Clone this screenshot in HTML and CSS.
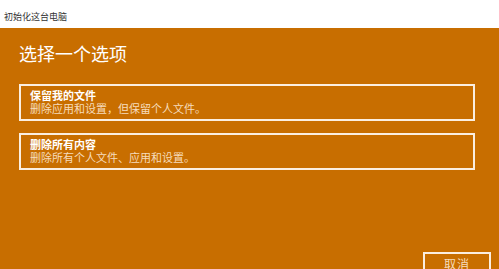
FILE: index.html
```html
<!DOCTYPE html>
<html lang="zh-CN">
<head>
<meta charset="utf-8">
<link rel="stylesheet" href="styles.css">
</head>
<body>
<div class="titlebar">初始化这台电脑</div>
<div class="main">
  <h1 class="heading">选择一个选项</h1>
  <div class="options">
    <div class="option">
      <div class="opt-title">保留我的文件</div>
      <div class="opt-desc">删除应用和设置，但保留个人文件。</div>
    </div>
    <div class="option">
      <div class="opt-title">删除所有内容</div>
      <div class="opt-desc">删除所有个人文件、应用和设置。</div>
    </div>
  </div>
  <div class="footer">
    <div class="btn">取消</div>
  </div>
</div>
</body>
</html>
```
FILE: styles.css
```css
html, body {
  margin: 0;
  padding: 0;
  width: 499px;
  height: 269px;
  overflow: hidden;
  font-family: "Noto Sans CJK SC", "Noto Sans", sans-serif;
}
body {
  background: #c86e00;
}
.titlebar {
  height: 28px;
  box-sizing: border-box;
  background: #ffffff;
  color: #333333;
  font-size: 9px;
  line-height: 12px;
  padding: 11px 0 0 4px;
}
.main {
  padding: 13px 0 0 19px;
}
.heading {
  margin: 0;
  font-size: 18px;
  line-height: 24px;
  font-weight: normal;
  color: #ffffff;
}
.options {
  margin-top: 19px;
  display: flex;
  flex-direction: column;
  gap: 12px;
  width: 456px;
}
.option {
  border: 2px solid #fbeee0;
  padding: 3px 9px 4px 9px;
}
.opt-title {
  font-size: 11px;
  line-height: 13px;
  font-weight: bold;
  color: #ffffff;
}
.opt-desc {
  font-size: 11px;
  line-height: 13px;
  color: #f6dcbc;
}
.footer {
  margin-top: 82px;
  display: flex;
  justify-content: flex-end;
  padding-right: 8px;
}
.btn {
  width: 68px;
  height: 30px;
  box-sizing: border-box;
  border: 2px solid #fbeee0;
  color: #f6dcbc;
  font-size: 12px;
  line-height: 14px;
  text-align: center;
  padding-top: 3px;
  letter-spacing: 1px;
}
```
